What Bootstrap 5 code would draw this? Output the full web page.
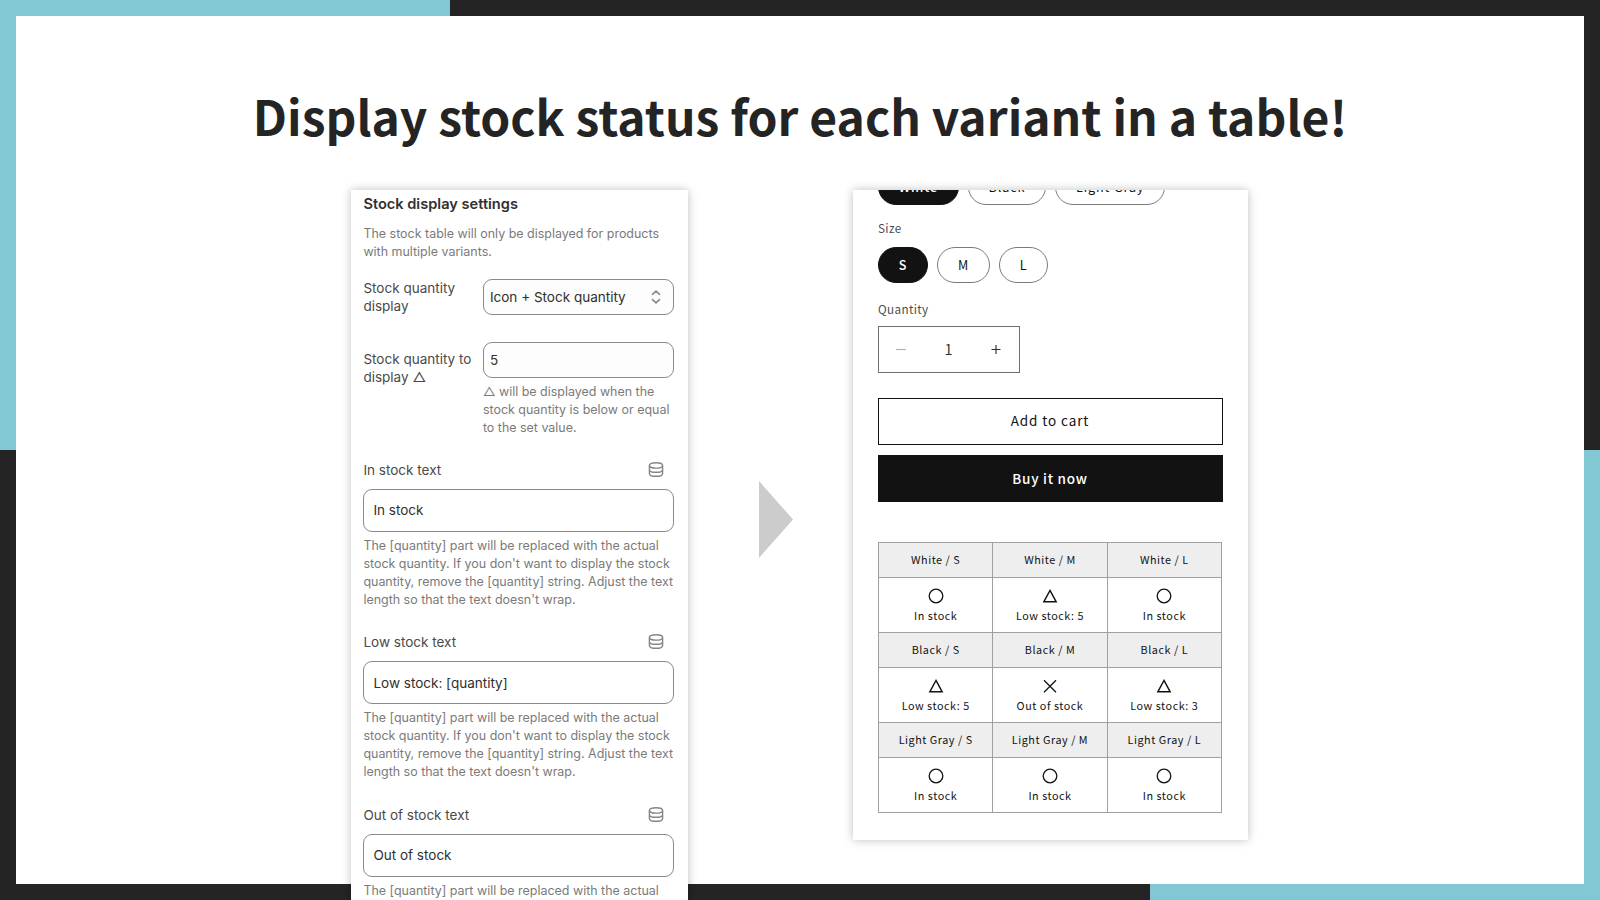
<!DOCTYPE html>
<html lang="en">
<head>
  <meta charset="UTF-8">
  <meta name="viewport" content="width=device-width, initial-scale=1.0">
  <title>Stock status table</title>
  <link href="https://cdn.jsdelivr.net/npm/bootstrap@5.3.0/dist/css/bootstrap.min.css" rel="stylesheet">
  <style>
    body {
      font-family: "Noto Sans CJK JP", sans-serif;
      color: #121212;
    }

    .slide {
      height: 900px;
      padding: 16px;
      background:
        linear-gradient(#82c7d4, #82c7d4) left top / 450px 450px no-repeat,
        linear-gradient(#82c7d4, #82c7d4) right bottom / 450px 450px no-repeat,
        #242424;
    }

    .slide-body {
      height: 868px;
    }

    .slide-title {
      height: 174px;
      padding-top: 64px;
      font-size: 48px;
      line-height: 70px;
      color: #242424;
    }

    .panels {
      padding-left: 335px;
    }

    .panel {
      box-shadow: 0 0 9px rgba(0, 0, 0, 0.25);
    }

    .arrow {
      margin: 291px 60px 0 71px;
    }

    /* Settings panel */
    .settings {
      width: 337px;
      height: 730px;
      padding: 4px 14px 0 12.4px;
      font-family: Inter, sans-serif;
      font-size: 13.53px;
      line-height: 18px;
      color: #4a4a4a;
    }

    .settings-title {
      margin-bottom: 11px;
      font-size: 14.6px;
      line-height: 20px;
      color: #303030;
    }

    .help {
      font-size: 12.46px;
      line-height: 18px;
      color: #7a7a7a;
      white-space: nowrap;
    }

    .setting-display {
      margin-top: 17.5px;
    }

    .setting-threshold {
      margin-top: 27px;
    }

    .setting-threshold .help {
      margin-top: 5px;
    }

    .field-name {
      width: 119.5px;
    }

    .field {
      height: 36px;
      padding: 0 12px 0 6px;
      border: 1px solid #8a8a8a;
      border-radius: 9px;
      background: #fdfdfd;
      color: #303030;
    }

    .field-lg {
      height: 43px;
      padding-left: 9px;
      margin: 10px 0 5px;
      background: #fff;
    }

    .text-setting {
      height: 148.5px;
      margin-top: 24px;
    }

    .text-setting svg {
      margin-right: 10.5px;
    }

    /* Product panel */
    .product {
      width: 395px;
      height: 650px;
      padding: 0 25px;
    }

    .option-name {
      font-size: 11.7px;
      line-height: 18px;
      letter-spacing: 0.36px;
      color: #4d4d4d;
    }

    .option-size {
      margin: 14px 0 10px;
    }

    .option-quantity {
      margin: 17px 0 8px;
    }

    .pills {
      gap: 9px;
    }

    .pills-color {
      margin-top: -21px;
    }

    .pill {
      height: 36px;
      padding: 0 19.8px 0 19.8px;
      border: 1px solid #7a7a7a;
      border-radius: 36px;
      font-size: 12.6px;
      line-height: 34px;
      letter-spacing: 0.9px;
    }

    .pill.active {
      background: #121212;
      border-color: #121212;
      color: #fff;
      font-weight: 500;
    }

    .stepper {
      width: 142px;
      height: 47px;
      padding: 0 18px 2px 17px;
      border: 1px solid #707070;
      font-size: 14.4px;
      color: #333;
    }

    .buy-buttons {
      gap: 10px;
      margin-top: 25px;
    }

    .buy-btn {
      height: 47px;
      padding: 0 1px 2px 0;
      border: 1px solid #121212;
      border-radius: 0;
      font-size: 13.5px;
      letter-spacing: 0.9px;
      color: #121212;
    }

    .buy-btn-dark {
      padding-bottom: 0;
      background: #121212;
      color: #fff;
      font-weight: 500;
      letter-spacing: 0.75px;
    }

    .stock-table {
      width: 344px;
      margin: 40px 0 0;
      table-layout: fixed;
      border-collapse: collapse;
      text-align: center;
      font-size: 10.8px;
      letter-spacing: 0.54px;
    }

    .stock-table th,
    .stock-table td {
      padding: 0;
      border: 1px solid #a0a0a0;
      font-weight: 400;
    }

    .stock-table th {
      height: 35px;
      padding-bottom: 2px;
      background: #eee;
      line-height: 32px;
    }

    .stock-table td {
      height: 55px;
      padding-bottom: 1px;
      line-height: 16px;
    }

    .stock-table svg {
      display: block;
      margin: 2px auto 3px;
    }
  </style>
</head>
<body>
  <svg class="d-none">
    <symbol id="circle" viewBox="0 0 16 16"><circle cx="8" cy="8" r="6.8" fill="none" stroke="#121212" stroke-width="1.3"/></symbol>
    <symbol id="triangle" viewBox="0 0 16 16"><path d="M8 2.4 14.2 13.8H1.8Z" fill="none" stroke="#121212" stroke-width="1.4"/></symbol>
    <symbol id="cross" viewBox="0 0 16 16"><path d="M2 2.200 14 14.200M14 2.200 2 14.200" fill="none" stroke="#121212" stroke-width="1.3"/></symbol>
    <symbol id="database" viewBox="0 0 16 16">
      <g fill="none" stroke="#858585" stroke-width="1.4">
        <ellipse cx="8" cy="3.900" rx="6.600" ry="2.700"/>
        <path d="M1.400 3.900v8c0 1.700 3 2.900 6.600 2.900s6.600-1.200 6.600-2.900v-8M1.400 7.900c0 1.700 3 2.900 6.600 2.900s6.600-1.200 6.600-2.900"/>
      </g>
    </symbol>
  </svg>

  <div class="slide overflow-hidden">
    <div class="slide-body bg-white">
      <h1 class="slide-title text-center fw-bold mb-0">Display stock status for each variant in a table!</h1>

      <div class="panels d-flex align-items-start">
        <!-- App settings -->
        <section class="panel settings bg-white flex-shrink-0">
          <h2 class="settings-title fw-semibold">Stock display settings</h2>
          <div class="help">The stock table will only be displayed for products<br>with multiple variants.</div>

          <div class="setting-display d-flex">
            <div class="field-name flex-shrink-0">Stock quantity<br>display</div>
            <div class="field flex-grow-1 d-flex align-items-center justify-content-between">
              <span>Icon + Stock quantity</span>
              <svg width="10" height="14" viewBox="0 0 10 14" fill="none" stroke="#8a8a8a" stroke-width="1.7" stroke-linecap="round" stroke-linejoin="round"><path d="M1.500 4.300 5 1.200l3.500 3.100M1.500 9.700 5 12.800l3.500-3.100"/></svg>
            </div>
          </div>

          <div class="setting-threshold d-flex">
            <div class="field-name flex-shrink-0 pt-2">Stock quantity to<br>display △</div>
            <div class="flex-grow-1">
              <div class="field d-flex align-items-center">5</div>
              <div class="help">△ will be displayed when the<br>stock quantity is below or equal<br>to the set value.</div>
            </div>
          </div>

          <div id="textSettings"></div>
        </section>

        <svg class="arrow flex-shrink-0" width="34" height="77" viewBox="0 0 34 77"><path d="M0 0 34 38.500 0 77Z" fill="#ccc"/></svg>

        <!-- Product page -->
        <section class="panel product bg-white flex-shrink-0 overflow-hidden">
          <div class="pills pills-color d-flex">
            <div class="pill active">White</div>
            <div class="pill">Black</div>
            <div class="pill">Light Gray</div>
          </div>
          <div class="option-name option-size">Size</div>
          <div class="pills d-flex">
            <div class="pill active">S</div>
            <div class="pill">M</div>
            <div class="pill">L</div>
          </div>
          <div class="option-name option-quantity">Quantity</div>
          <div class="stepper d-flex align-items-center justify-content-between">
            <svg width="10" height="10" viewBox="0 0 10 10" stroke="#b0b0b0" stroke-width="1.1"><path d="M0 5.500h10"/></svg>
            <span>1</span>
            <svg width="10" height="10" viewBox="0 0 10 10" stroke="#333" stroke-width="1.2"><path d="M.5 5.500h9M5 1v9"/></svg>
          </div>
          <div class="buy-buttons d-grid">
            <button type="button" class="btn buy-btn">Add to cart</button>
            <button type="button" class="btn buy-btn buy-btn-dark">Buy it now</button>
          </div>
          <table class="stock-table">
            <tbody id="stockTable"></tbody>
          </table>
        </section>
      </div>
    </div>
  </div>

  <script src="https://cdn.jsdelivr.net/npm/bootstrap@5.3.0/dist/js/bootstrap.bundle.min.js"></script>
  <script>
    const textSettings = [
      ["In stock text", "In stock"],
      ["Low stock text", "Low stock: [quantity]"],
      ["Out of stock text", "Out of stock"]
    ];

    document.getElementById("textSettings").innerHTML = textSettings
      .map(([label, value]) => `
        <div class="text-setting">
          <div class="d-flex justify-content-between">
            <span>${label}</span>
            <svg width="16" height="17"><use href="#database"/></svg>
          </div>
          <div class="field field-lg d-flex align-items-center">${value}</div>
          <div class="help">The [quantity] part will be replaced with the actual<br>stock quantity. If you don't want to display the stock<br>quantity, remove the [quantity] string. Adjust the text<br>length so that the text doesn't wrap.</div>
        </div>`)
      .join("");

    const sizes = ["S", "M", "L"];
    const stock = [
      ["White", [["circle", "In stock"], ["triangle", "Low stock: 5"], ["circle", "In stock"]]],
      ["Black", [["triangle", "Low stock: 5"], ["cross", "Out of stock"], ["triangle", "Low stock: 3"]]],
      ["Light Gray", [["circle", "In stock"], ["circle", "In stock"], ["circle", "In stock"]]]
    ];

    document.getElementById("stockTable").innerHTML = stock
      .map(([color, cells]) => `
        <tr>${sizes.map((size) => `<th>${color} / ${size}</th>`).join("")}</tr>
        <tr>${cells.map(([icon, text]) => `<td><svg width="16" height="16"><use href="#${icon}"/></svg>${text}</td>`).join("")}</tr>`)
      .join("");
  </script>
</body>
</html>
